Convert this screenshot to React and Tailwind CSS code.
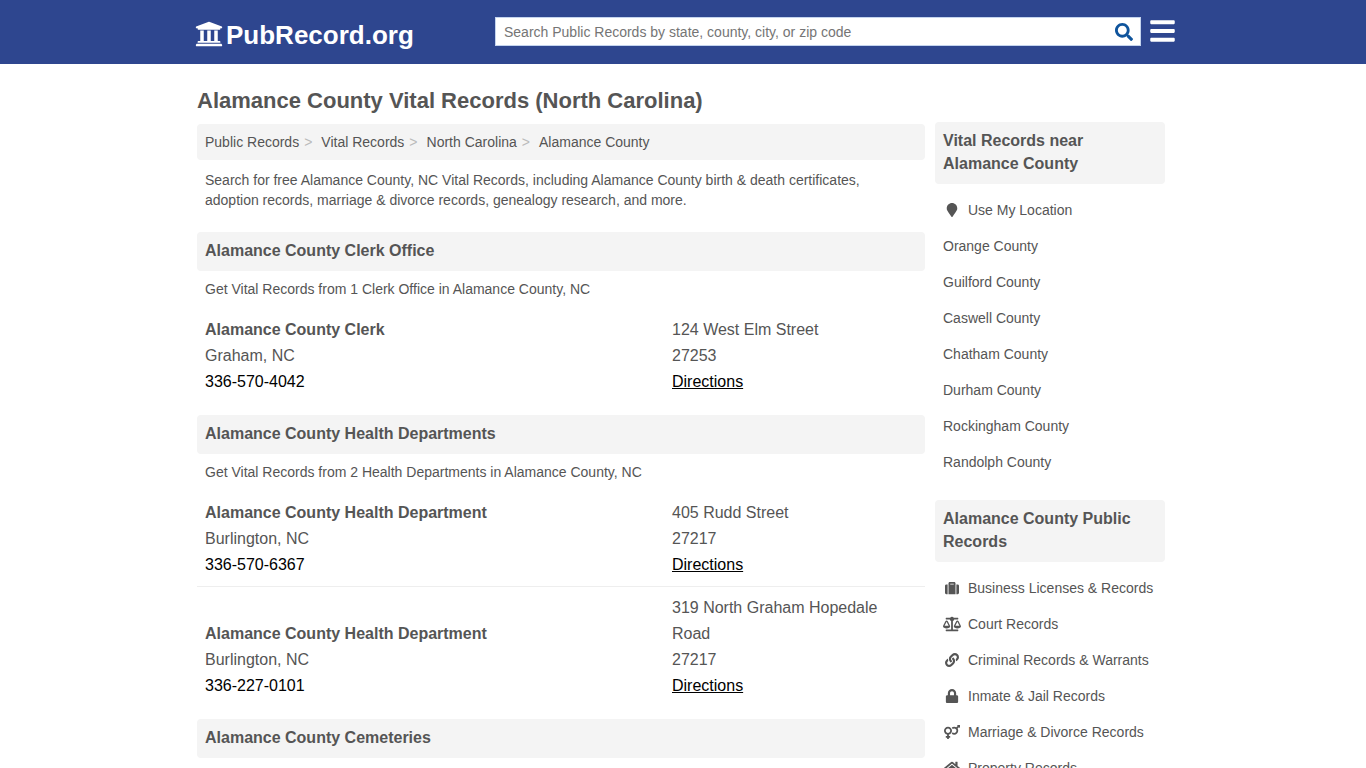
import React from "react";
import {
  FaUniversity,
  FaSearch,
  FaBars,
  FaMapMarker,
  FaSuitcase,
  FaBalanceScale,
  FaLink,
  FaLock,
  FaVenusMars,
  FaHome,
} from "react-icons/fa";

const crumbs = ["Public Records", "Vital Records", "North Carolina", "Alamance County"];

const sections = [
  {
    title: "Alamance County Clerk Office",
    intro: "Get Vital Records from 1 Clerk Office in Alamance County, NC",
    offices: [
      { name: "Alamance County Clerk", city: "Graham, NC", phone: "336-570-4042", street: "124 West Elm Street", zip: "27253" },
    ],
  },
  {
    title: "Alamance County Health Departments",
    intro: "Get Vital Records from 2 Health Departments in Alamance County, NC",
    offices: [
      { name: "Alamance County Health Department", city: "Burlington, NC", phone: "336-570-6367", street: "405 Rudd Street", zip: "27217" },
      { name: "Alamance County Health Department", city: "Burlington, NC", phone: "336-227-0101", street: "319 North Graham Hopedale Road", zip: "27217" },
    ],
  },
  { title: "Alamance County Cemeteries", offices: [] },
];

const nearby = [
  { label: "Use My Location", Icon: FaMapMarker, size: "size-[14px]" },
  { label: "Orange County" },
  { label: "Guilford County" },
  { label: "Caswell County" },
  { label: "Chatham County" },
  { label: "Durham County" },
  { label: "Rockingham County" },
  { label: "Randolph County" },
];

const records = [
  { label: "Business Licenses & Records", Icon: FaSuitcase, size: "size-[14px]" },
  { label: "Court Records", Icon: FaBalanceScale, size: "size-[18px]" },
  { label: "Criminal Records & Warrants", Icon: FaLink, size: "size-[14px]" },
  { label: "Inmate & Jail Records", Icon: FaLock, size: "size-[14px]" },
  { label: "Marriage & Divorce Records", Icon: FaVenusMars, size: "size-4" },
  { label: "Property Records", Icon: FaHome, size: "size-4" },
];

function Heading({ children }) {
  return (
    <h2 className="rounded bg-[#f4f4f4] px-2 pt-[7px] pb-[9px] text-base leading-[23px] font-bold">{children}</h2>
  );
}

function Office({ office }) {
  return (
    <li className="flex items-end border-t border-[#eeeeee] px-2 py-2 text-base leading-[26px] first:border-t-0">
      <div className="flex-1">
        <h3 className="font-bold">{office.name}</h3>
        <p>{office.city}</p>
        <a href={`tel:${office.phone}`} className="block text-black">{office.phone}</a>
      </div>
      <div className="w-[245px]">
        <p>{office.street}</p>
        <p>{office.zip}</p>
        <a href="#directions" className="text-black underline">Directions</a>
      </div>
    </li>
  );
}

function SideBlock({ title, items }) {
  return (
    <section>
      <Heading>{title}</Heading>
      <ul className="mt-2">
        {items.map(({ label, Icon, size }) => (
          <li key={label}>
            <a href="#records" className="flex h-9 items-center gap-[7px] px-2 text-sm">
              {Icon && (
                <span className="flex w-[18px] shrink-0 justify-center">
                  <Icon className={size} />
                </span>
              )}
              {label}
            </a>
          </li>
        ))}
      </ul>
    </section>
  );
}

export default function App() {
  return (
    <div className="h-screen overflow-hidden bg-white font-['Liberation_Sans',Arial,sans-serif] text-[#555555]">
      <header className="bg-[#2e468f] pb-px">
        <div className="mx-auto flex h-[63px] max-w-[984px] items-center pl-1">
          <a href="#home" className="flex items-center gap-[3px] text-[26px] leading-[30px] font-bold text-white">
            <FaUniversity className="mt-1 size-7" />
            <span className="pt-[7px]">PubRecord.org</span>
          </a>
          <form className="ml-auto flex h-[29px] w-[646px] items-center border border-[#c4d4ee] bg-white" onSubmit={(e) => e.preventDefault()}>
            <input
              type="text"
              aria-label="Search Public Records"
              placeholder="Search Public Records by state, county, city, or zip code"
              className="h-full min-w-0 flex-1 px-2 text-sm outline-none placeholder:text-[#757575]"
            />
            <button type="submit" aria-label="Search" className="px-[7px] text-[#0f549c]">
              <FaSearch className="size-[18px]" />
            </button>
          </form>
          <button type="button" aria-label="Menu" className="ml-[9px] pb-[2px] text-white">
            <FaBars className="h-7 w-[25px]" />
          </button>
        </div>
      </header>

      <div className="mx-auto flex max-w-[976px] gap-[10px] pr-[6px] pl-[2px]">
        <main className="min-w-0 flex-1">
          <h1 className="pt-[22px] pb-2 text-[22px] leading-[30px] font-bold">
            Alamance County Vital Records (North Carolina)
          </h1>
          <nav aria-label="Breadcrumb" className="rounded bg-[#f4f4f4] px-2 text-sm leading-9">
            <ol className="flex">
              {crumbs.map((crumb, i) => (
                <li key={crumb} className="flex">
                  <a href="#crumb">{crumb}</a>
                  {i < crumbs.length - 1 && <span className="pr-[9px] pl-[5px] text-[#bbbbbb]">&gt;</span>}
                </li>
              ))}
            </ol>
          </nav>
          <p className="px-2 pt-[10px] pb-[22px] text-sm leading-5">
            Search for free Alamance County, NC Vital Records, including Alamance County birth &amp; death
            certificates, adoption records, marriage &amp; divorce records, genealogy research, and more.
          </p>
          {sections.map((section) => (
            <section key={section.title} className="mb-3">
              <Heading>{section.title}</Heading>
              {section.intro && <p className="px-2 pt-2 text-sm leading-5">{section.intro}</p>}
              <ul className="mt-[10px]">
                {section.offices.map((office) => (
                  <Office key={office.phone} office={office} />
                ))}
              </ul>
            </section>
          ))}
        </main>
        <aside className="flex w-[230px] shrink-0 flex-col gap-5 pt-[58px]">
          <SideBlock title="Vital Records near Alamance County" items={nearby} />
          <SideBlock title="Alamance County Public Records" items={records} />
        </aside>
      </div>
    </div>
  );
}
